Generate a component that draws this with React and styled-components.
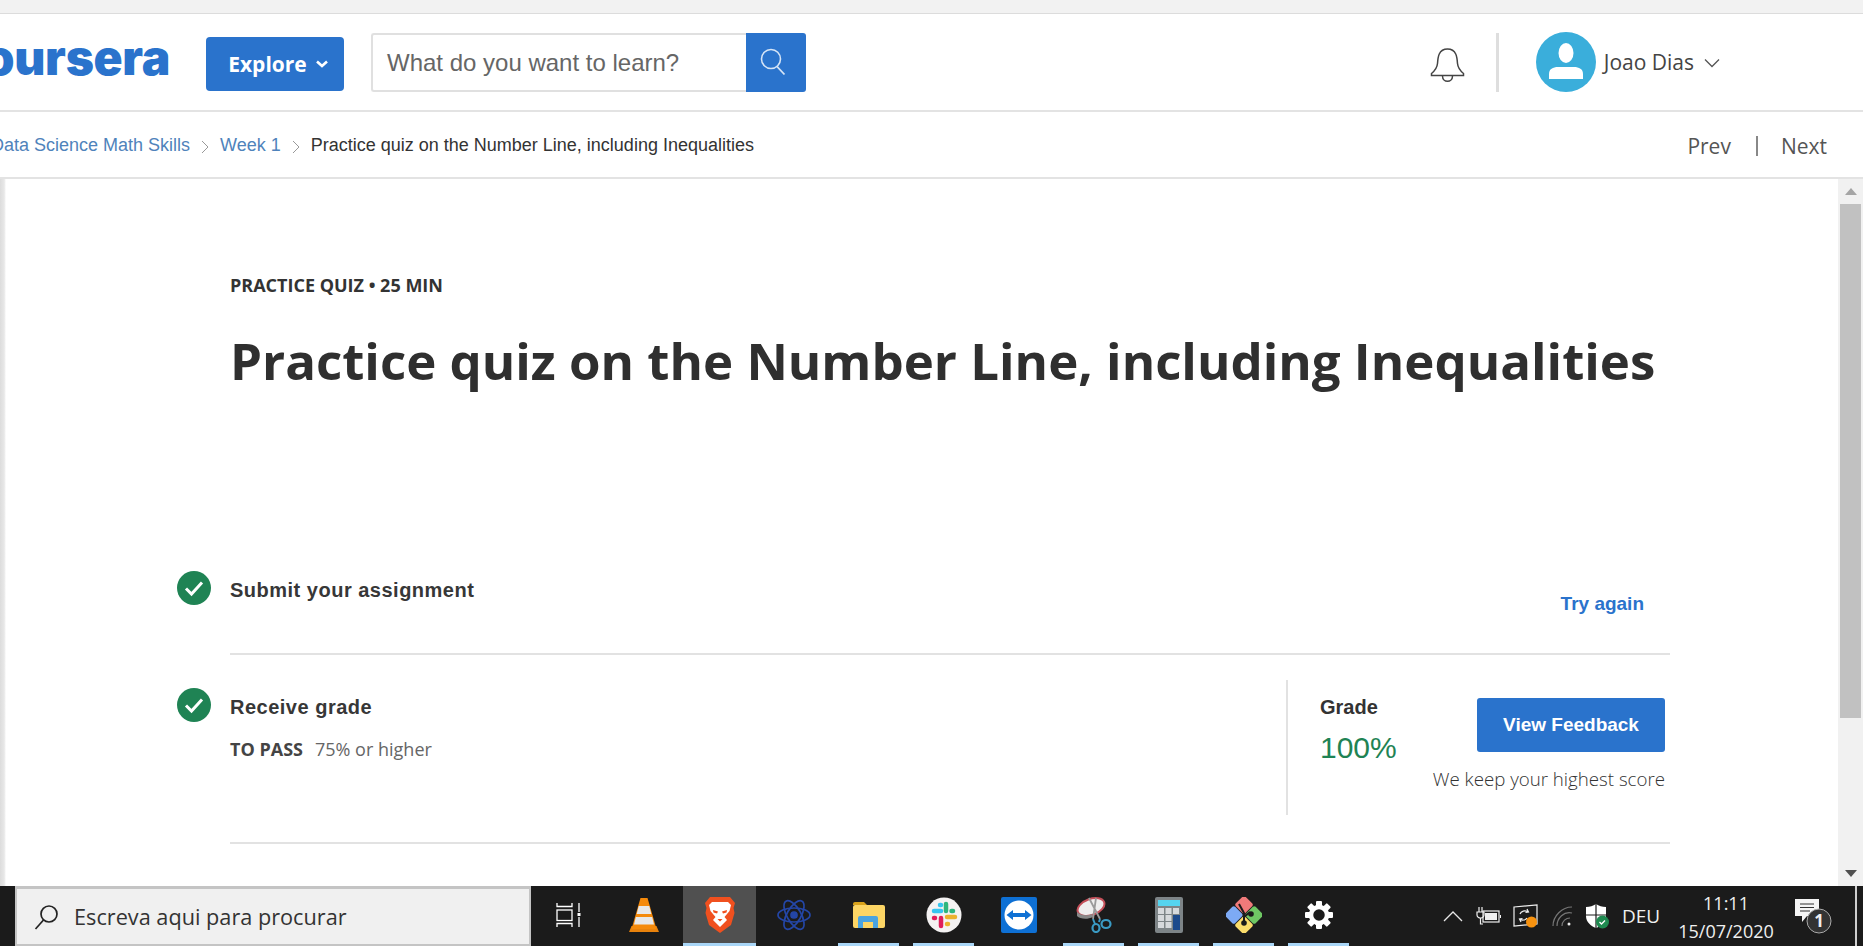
import React from "react";
import styled, { createGlobalStyle } from "styled-components";

const Global = createGlobalStyle`
  html, body { margin: 0; padding: 0; height: 946px; overflow: hidden; background: #fff; }
  body { font-family: "Open Sans", sans-serif; }
  * { box-sizing: border-box; }
`;
const Page = styled.div`width:1863px;height:946px;display:flex;flex-direction:column;overflow:hidden;`;
const BrowserStrip = styled.div`height:14px;flex:none;background:#f2f2f2;border-bottom:1px solid #dcdcdc;`;
const Header = styled.header`height:98px;flex:none;display:flex;align-items:center;border-bottom:2px solid #e3e3e3;`;
const LogoClip = styled.div`width:170px;flex:none;display:flex;justify-content:flex-end;overflow:hidden;margin-bottom:9px;`;
const Logo = styled.span`font-family:Inter,sans-serif;font-weight:900;font-size:48px;letter-spacing:-.3px;line-height:56px;color:#2a73cc;white-space:nowrap;`;
const ExploreBtn = styled.button`margin:4px 0 0 36px;width:138px;height:54px;border:none;border-radius:4px;background:#2a73cc;color:#fff;font-family:"Open Sans",sans-serif;font-weight:700;font-size:21px;display:flex;align-items:center;justify-content:center;gap:9px;padding:0 0 0 6px;`;
const SearchBox = styled.div`margin-left:27px;display:flex;height:59px;`;
const SearchInput = styled.div`width:375px;border:2px solid #e0e0e0;border-right:none;border-radius:3px 0 0 3px;padding:2px 0 0 14px;display:flex;align-items:center;font-family:"Liberation Sans",sans-serif;font-size:24px;color:#666;`;
const SearchBtn = styled.div`width:60px;background:#2a73cc;border-radius:0 3px 3px 0;display:flex;align-items:center;justify-content:center;padding-right:7px;`;
const HeaderRight = styled.div`margin-left:auto;display:flex;align-items:center;padding-right:143px;`;
const BellSlot = styled.div`display:flex;padding-top:5px;`;
const HeaderDivider = styled.div`width:3px;height:59px;background:#dedede;margin:0 37px 0 31px;`;
const UserName = styled.span`font-size:21px;color:#444;margin-left:8px;`;
const UserChevron = styled.span`display:flex;margin-left:10px;padding-top:2px;`;

const Crumbs = styled.nav`height:67px;flex:none;display:flex;align-items:center;border-bottom:2px solid #e3e3e3;font-family:"Liberation Sans",sans-serif;font-size:18px;color:#333;padding-top:2px;`;
const CrumbClip = styled.div`width:190px;flex:none;display:flex;justify-content:flex-end;overflow:hidden;white-space:nowrap;`;
const CrumbLink = styled.span`color:#4f83bb;white-space:nowrap;`;
const CrumbSep = styled.span`display:flex;width:30px;justify-content:center;padding-top:2px;`;
const PrevNext = styled.div`margin-left:auto;display:flex;align-items:center;padding-right:36px;font-family:"Open Sans",sans-serif;font-size:21px;color:#555;`;
const PipeSep = styled.span`width:2px;height:20px;background:#888;margin:0 23px 0 25px;`;

const Main = styled.main`flex:1;min-height:0;display:flex;`;
const LeftEdge = styled.div`width:6px;flex:none;background:linear-gradient(90deg,#dcdcdc,#e8e8e8 70%,#fff);`;
const Content = styled.div`flex:1;min-width:0;padding:94px 0 0 171px;`;
const Scrollbar = styled.div`width:25px;flex:none;background:#f1f1f1;padding:0 2px;display:flex;flex-direction:column;align-items:stretch;`;
const ScrollArrow = styled.div`height:25px;flex:none;display:flex;align-items:center;justify-content:center;${p=>p.$down?"margin-top:auto;height:26px;":""}`;
const ScrollThumb = styled.div`height:514px;background:#c1c1c1;`;
const Intro = styled.div`padding-left:53px;height:298px;`;
const Eyebrow = styled.div`font-weight:700;font-size:18px;line-height:24px;color:#333;`;
const Title = styled.h1`margin:31px 0 0;font-weight:700;font-size:51px;line-height:64px;color:#2f2f2f;white-space:nowrap;`;
const Step = styled.section`display:flex;width:1493px;`;
const CheckSlot = styled.div`width:34px;height:34px;flex:none;margin:${p=>p.$top}px 19px 0 0;`;
const StepBody = styled.div`flex:1;display:flex;justify-content:space-between;border-bottom:2px solid #e2e2e2;height:${p=>p.$h}px;`;
const StepLeft = styled.div`padding-top:${p=>p.$top}px;`;
const StepTitle = styled.div`font-family:"Liberation Sans",sans-serif;font-weight:700;font-size:20px;letter-spacing:.5px;line-height:38px;color:#373737;`;
const PassLine = styled.div`margin-top:5px;font-size:18px;line-height:36px;color:#666;`;
const PassLabel = styled.b`font-weight:700;font-size:18px;color:#444;margin-right:12px;`;
const TryAgain = styled.a`font-family:"Liberation Sans",sans-serif;font-weight:700;font-size:19px;line-height:38px;color:#2a73cc;margin:14px 26px 0 0;`;
const GradePanel = styled.div`margin-top:25px;height:135px;width:384px;border-left:2px solid #e2e2e2;padding:0 5px 0 32px;display:flex;justify-content:space-between;`;
const GradeCol = styled.div`padding-top:8px;`;
const GradeLabel = styled.div`font-family:"Liberation Sans",sans-serif;font-weight:700;font-size:20px;line-height:38px;color:#333;`;
const GradeValue = styled.div`font-family:"Liberation Sans",sans-serif;font-size:30px;line-height:40px;margin-top:2px;color:#1f8354;`;
const ActionCol = styled.div`padding-top:18px;display:flex;flex-direction:column;align-items:flex-end;`;
const FeedbackBtn = styled.button`width:188px;height:54px;border:none;border-radius:3px;background:#2a73cc;color:#fff;font-family:"Liberation Sans",sans-serif;font-weight:700;font-size:19px;`;
const Keep = styled.div`margin-top:15px;font-size:18.7px;font-weight:300;line-height:24px;color:#333;white-space:nowrap;`;

const Taskbar = styled.footer`height:60px;flex:none;background:#1b1b1b;display:flex;color:#fff;padding-left:15px;`;
const TaskSearch = styled.div`width:516px;flex:none;background:#f0f0f0;border:solid #c4c4c4;border-width:3px 2px 2px 2px;display:flex;align-items:center;gap:15px;padding-left:17px;font-size:21.7px;color:#333;`;
const Tiles = styled.div`display:flex;`;
const Tile = styled.div`position:relative;width:75px;display:flex;align-items:center;justify-content:center;padding-bottom:3px;${p=>p.$active?"background:#505050;background-clip:padding-box;border-left:2px solid transparent;":""}
  &::after{content:"";display:${p=>p.$open?"block":"none"};position:absolute;bottom:0;height:3px;background:#a9d6f7;left:${p=>p.$active?0:7}px;right:${p=>p.$active?0:7}px;}`;
const Tray = styled.div`margin-left:auto;display:flex;`;
const TraySlot = styled.div`width:${p=>p.$w}px;display:flex;align-items:center;justify-content:center;`;
const TrayLabel = styled(TraySlot)`font-size:19px;color:#f0f0f0;`;
const Clock = styled(TraySlot)`flex-direction:column;font-size:18px;line-height:28px;color:#f0f0f0;padding-top:1px;`;
const EndLine = styled.div`width:2px;background:#cfcfcf;margin-left:12px;margin-right:6px;`;

const Check = () => (
  <svg width="34" height="34" viewBox="0 0 34 34"><circle cx="17" cy="17" r="17" fill="#1f8354"/><path d="M9 17.5l5.5 5.5L25 11.5" fill="none" stroke="#fff" strokeWidth="3"/></svg>
);
const Chev = ({w=16,h=10,c="#555",sw=1.3}) => (
  <svg width={w} height={h} viewBox="0 0 16 10"><path d="M1 1.5l7 7 7-7" fill="none" stroke={c} strokeWidth={sw}/></svg>
);
const CrumbChev = () => (
  <svg width="8" height="14" viewBox="0 0 8 14"><path d="M1 1l6 6-6 6" fill="none" stroke="#999" strokeWidth="1"/></svg>
);
const Magnifier = () => (
  <svg width="26" height="28" viewBox="0 0 26 28"><circle cx="11" cy="11" r="9.5" fill="none" stroke="#d5e4f6" strokeWidth="1.6"/><path d="M17 18.5l7.5 8" stroke="#d5e4f6" strokeWidth="1.8"/></svg>
);
const Bell = () => (
  <svg width="35" height="37" viewBox="0 0 35 37" fill="none" stroke="#444" strokeWidth="1.5"><path d="M1.5 29.5v-2c3.6-3 5.6-5.6 6-10 .4-6 1-14.5 10-14.5s9.600 8.500 10 14.500c.4 4.400 2.400 7 6 10v2z"/><path d="M12.500 30c0 7 10 7 10 0"/></svg>
);
const Avatar = () => (
  <svg width="60" height="60" viewBox="0 0 60 60"><circle cx="30" cy="30" r="30" fill="#3aaedb"/><ellipse cx="30" cy="21" rx="7.500" ry="10" fill="#fff"/><path d="M13 47v-5c0-5 4-7 9-7h16c5 0 9 2 9 7v5z" fill="#fff"/></svg>
);
const ExploreChev = () => (
  <svg width="12" height="8" viewBox="0 0 12 8"><path d="M1 1.500l5 4.500 5-4.500" fill="none" stroke="#fff" strokeWidth="2.600"/></svg>
);
const ScrollTri = ({down,c}) => (
  <svg width="12" height="7" viewBox="0 0 12 7"><path d={down?"M0 0h12L6 7z":"M0 7h12L6 0z"} fill={c}/></svg>
);
const WinSearch = () => (
  <svg width="25" height="26" viewBox="0 0 25 26" fill="none" stroke="#222" strokeWidth="1.700"><circle cx="15" cy="10" r="8"/><path d="M9.500 16L1.500 25"/></svg>
);
const TaskView = () => (
  <svg width="28" height="26" viewBox="0 0 28 26" fill="none" stroke="#fff" strokeWidth="1.300"><path d="M2 1v3.500h15V1M2 25v-3.500h15V25"/><rect x="2" y="8" width="15" height="10.500"/><path d="M24 1v9M24 15v10"/><rect x="22.500" y="11" width="3" height="3" fill="#fff" stroke="none"/></svg>
);
const Vlc = () => (
  <svg width="32" height="36" viewBox="0 0 32 36"><path d="M1 35l2.500-6h25l2.500 6z" fill="#e8820c"/><path d="M12.500 1h7l9 31H3.500z" fill="#f58a0b"/><path d="M10.700 9h10.600l2 8H8.700zM7.800 20h16.400l1.800 7.500H6z" fill="#e8e8e8"/></svg>
);
const Brave = () => (
  <svg width="32" height="37" viewBox="0 0 32 37"><path d="M6 1h20l5 6-1.500 5 1 5-3.500 12-11 8-11-8L1.500 17l1-5L1 7z" fill="#f0501f"/><path d="M8 6h16l3 3-1.500 6-5 6 2.500 3-7 7-7-7 2.500-3-5-6L5 9z" fill="#fff"/><path d="M9 14l5 1.500-1 2-3.500-1zM23 14l-5 1.500 1 2 3.500-1zM13.500 23h5L16 25.500z" fill="#f0501f"/></svg>
);
const Atom = () => (
  <svg width="34" height="36" viewBox="0 0 34 36" fill="none" stroke="#2446a6" strokeWidth="1.700"><ellipse cx="17" cy="18" rx="16" ry="7"/><ellipse cx="17" cy="18" rx="16" ry="7" transform="rotate(60 17 18)"/><ellipse cx="17" cy="18" rx="16" ry="7" transform="rotate(120 17 18)"/><circle cx="17" cy="18" r="3" fill="#2446a6"/></svg>
);
const Folder = () => (
  <svg width="33" height="28" viewBox="0 0 33 28"><path d="M1 3a2 2 0 012-2h9l3 3h-14z" fill="#d9a21b"/><rect x="1" y="4" width="32" height="23" rx="2" fill="#fcd565"/><path d="M6 27v-10a2 2 0 012-2h16a2 2 0 012 2v10h-5v-6h-10v6z" fill="#4aa3e0"/></svg>
);
const Slack = () => (
  <svg width="36" height="36" viewBox="0 0 36 36"><circle cx="18" cy="18" r="17.500" fill="#f4f2f2"/><g strokeWidth="4.500" strokeLinecap="round" fill="none"><path d="M8 14h7" stroke="#36c5f0"/><path d="M20 7v7" stroke="#2eb67d"/><path d="M25.500 14h1.500" stroke="#2eb67d"/><path d="M21 20h8" stroke="#ecb22e"/><path d="M21 27h1" stroke="#ecb22e"/><path d="M15 21v8" stroke="#e01e5a"/><path d="M8 21h1" stroke="#e01e5a"/><path d="M14 8h1" stroke="#36c5f0"/></g></svg>
);
const TeamViewer = () => (
  <svg width="36" height="36" viewBox="0 0 36 36"><rect width="36" height="36" rx="2" fill="#0e70d4"/><circle cx="18" cy="18" r="14.500" fill="#fff"/><path d="M5.500 18l6.500-5v3h12v-3l6.500 5-6.500 5v-3h-12v3z" fill="#0e70d4"/></svg>
);
const Snip = () => (
  <svg width="36" height="36" viewBox="0 0 36 36" fill="none"><ellipse cx="15" cy="10" rx="14" ry="8" transform="rotate(-20 15 10)" fill="#eee" stroke="#c5505a" strokeWidth="2"/><path d="M1 15c4 4 11 4 15 2l1 3c-6 3-13 2-16-1z" fill="#888"/><path d="M13 1l11 21M20 1l-3 21" stroke="#9a9a9a" strokeWidth="1.800"/><path d="M17 22l2 5M24 22l-1 3" stroke="#3a9bc4" strokeWidth="2"/><ellipse cx="20" cy="31" rx="3.500" ry="4" stroke="#3a9bc4" strokeWidth="2.200"/><ellipse cx="30" cy="27" rx="4.500" ry="4" stroke="#3a9bc4" strokeWidth="2.200"/></svg>
);
const Calc = () => (
  <svg width="28" height="36" viewBox="0 0 28 36"><rect width="28" height="36" rx="2" fill="#7d8487"/><rect x="3" y="3" width="22" height="6" fill="#55d4ef"/>{[[3,11],[10.500,11],[18,11],[3,18],[10.500,18],[3,25],[10.500,25]].map(([x,y])=><rect key={x+"-"+y} x={x} y={y} width="6" height="6" fill="#d6d9dc"/>)}<rect x="18" y="18" width="7" height="15" fill="#1c4a8c"/></svg>
);
const GitApp = () => (
  <svg width="36" height="36" viewBox="0 0 36 36"><g transform="rotate(45 18 18)"><rect x="4" y="4" width="13.500" height="13.500" rx="2" fill="#f07a7a"/><rect x="18.500" y="4" width="13.500" height="13.500" rx="2" fill="#6fc864"/><rect x="4" y="18.500" width="13.500" height="13.500" rx="2" fill="#7daaf5"/><rect x="18.500" y="18.500" width="13.500" height="13.500" rx="2" fill="#fbdd6b"/></g><path d="M18 28V16L13 7M18 20l6-5" stroke="#1b1b1b" strokeWidth="2" fill="none"/><circle cx="18" cy="26" r="2.800" fill="#1b1b1b"/><circle cx="25" cy="17" r="2.800" fill="#1b1b1b"/></svg>
);
const Gear = () => (
  <svg width="28" height="28" viewBox="0 0 28 28">{[0,45,90,135,180,225,270,315].map(a=><rect key={a} x="11" y="0" width="6" height="7" fill="#fff" rx="1" transform={`rotate(${a} 14 14)`}/>)}<circle cx="14" cy="14" r="8" fill="none" stroke="#fff" strokeWidth="4.500"/></svg>
);
const TrayUp = () => (
  <svg width="20" height="11" viewBox="0 0 20 11"><path d="M1 10l9-9 9 9" fill="none" stroke="#e8e8e8" strokeWidth="1.300"/></svg>
);
const Plug = () => (
  <svg width="25" height="20" viewBox="0 0 25 20" fill="none" stroke="#f0f0f0" strokeWidth="1.200"><path d="M1 6h7v3c0 2-2 3-3.500 3S1 11 1 9zM3 6V1M6 6V1M4.500 12v6H7"/><rect x="7" y="5" width="16" height="11"/><rect x="9" y="7" width="12" height="7" fill="#f0f0f0" stroke="none"/><path d="M24.500 9v3"/></svg>
);
const SyncApp = () => (
  <svg width="25" height="24" viewBox="0 0 25 24" fill="none" stroke="#f0f0f0" strokeWidth="1.200"><path d="M1 3l23-2v19l-23 2z"/><path d="M7 10c1-3 5-4 8-2M14 5l1.500 3-3 .5M14 14c-1 2-5 3-7 1M8 18l-1.500-3 3-.5"/><circle cx="18.500" cy="18" r="5.500" fill="#f7920f" stroke="none"/></svg>
);
const Wifi = () => (
  <svg width="22" height="21" viewBox="0 0 22 21" fill="none" stroke="#777" strokeWidth="1.200"><path d="M1 20C1 10 10 1 20 1M5 20c0-8 7-15 15-13M10 20c0-5 4-8 8-8"/><circle cx="17" cy="18" r="1.500" fill="#eee" stroke="none"/></svg>
);
const Shield = () => (
  <svg width="24" height="25" viewBox="0 0 24 25"><path d="M1 3c4 0 7-1 10-3 3 2 6 3 10 3v9c0 6-5 10-10 12C6 22 1 18 1 12z" fill="#fff"/><path d="M11 0v24M1 11h20" stroke="#1b1b1b" strokeWidth="1.200"/><circle cx="17.500" cy="18" r="6.500" fill="#1f8a50"/><path d="M14.500 18l2 2 3.500-3.500" stroke="#fff" strokeWidth="1.300" fill="none"/></svg>
);
const Notif = () => (
  <svg width="38" height="38" viewBox="0 0 38 38"><path d="M1 2h24v17h-12l-5 6v-6H1z" fill="#f5f5f5"/><path d="M6 7h14M6 10.500h14M6 14h10" stroke="#333" strokeWidth="1.200"/><circle cx="25" cy="24" r="12" fill="#333" stroke="#aaa" strokeWidth="1"/><text x="25" y="30" textAnchor="middle" fontSize="17" fontWeight="700" fontFamily="Open Sans" fill="#f0f0f0">1</text></svg>
);

const apps = [
  { id:"tv", I:TaskView },
  { id:"vlc", I:Vlc },
  { id:"brave", I:Brave, open:true, active:true },
  { id:"atom", I:Atom },
  { id:"folder", I:Folder, open:true },
  { id:"slack", I:Slack, open:true },
  { id:"team", I:TeamViewer },
  { id:"snip", I:Snip, open:true },
  { id:"calc", I:Calc, open:true },
  { id:"git", I:GitApp, open:true },
  { id:"gear", I:Gear, open:true },
];

export default function App() {
  return (
    <Page>
      <Global />
      <BrowserStrip />
      <Header>
        <LogoClip><Logo>coursera</Logo></LogoClip>
        <ExploreBtn>Explore <ExploreChev /></ExploreBtn>
        <SearchBox>
          <SearchInput>What do you want to learn?</SearchInput>
          <SearchBtn><Magnifier /></SearchBtn>
        </SearchBox>
        <HeaderRight>
          <BellSlot><Bell /></BellSlot>
          <HeaderDivider />
          <Avatar />
          <UserName>Joao Dias</UserName>
          <UserChevron><Chev /></UserChevron>
        </HeaderRight>
      </Header>
      <Crumbs>
        <CrumbClip><CrumbLink>Data Science Math Skills</CrumbLink></CrumbClip>
        <CrumbSep><CrumbChev /></CrumbSep>
        <CrumbLink>Week 1</CrumbLink>
        <CrumbSep><CrumbChev /></CrumbSep>
        <span>Practice quiz on the Number Line, including Inequalities</span>
        <PrevNext>Prev<PipeSep />Next</PrevNext>
      </Crumbs>
      <Main>
        <LeftEdge />
        <Content>
          <Intro>
            <Eyebrow>PRACTICE QUIZ • 25 MIN</Eyebrow>
            <Title>Practice quiz on the Number Line, including Inequalities</Title>
          </Intro>
          <Step>
            <CheckSlot $top={0}><Check /></CheckSlot>
            <StepBody $h={84}>
              <StepLeft $top={0}><StepTitle>Submit your assignment</StepTitle></StepLeft>
              <TryAgain>Try again</TryAgain>
            </StepBody>
          </Step>
          <Step>
            <CheckSlot $top={33}><Check /></CheckSlot>
            <StepBody $h={189}>
              <StepLeft $top={33}>
                <StepTitle>Receive grade</StepTitle>
                <PassLine><PassLabel>TO PASS</PassLabel>75% or higher</PassLine>
              </StepLeft>
              <GradePanel>
                <GradeCol>
                  <GradeLabel>Grade</GradeLabel>
                  <GradeValue>100%</GradeValue>
                </GradeCol>
                <ActionCol>
                  <FeedbackBtn>View Feedback</FeedbackBtn>
                  <Keep>We keep your highest score</Keep>
                </ActionCol>
              </GradePanel>
            </StepBody>
          </Step>
        </Content>
        <Scrollbar>
          <ScrollArrow><ScrollTri c="#a5a5a5" /></ScrollArrow>
          <ScrollThumb />
          <ScrollArrow $down><ScrollTri down c="#505050" /></ScrollArrow>
        </Scrollbar>
      </Main>
      <Taskbar>
        <TaskSearch><WinSearch />Escreva aqui para procurar</TaskSearch>
        <Tiles>
          {apps.map(({id,I,open,active}) => (
            <Tile key={id} $open={open} $active={active}><I /></Tile>
          ))}
        </Tiles>
        <Tray>
          <TraySlot $w={34}><TrayUp /></TraySlot>
          <TraySlot $w={36}><Plug /></TraySlot>
          <TraySlot $w={38}><SyncApp /></TraySlot>
          <TraySlot $w={37}><Wifi /></TraySlot>
          <TraySlot $w={32}><Shield /></TraySlot>
          <TrayLabel $w={56}>DEU</TrayLabel>
          <Clock $w={114}><span>11:11</span><span>15/07/2020</span></Clock>
          <TraySlot $w={60}><Notif /></TraySlot>
          <EndLine />
        </Tray>
      </Taskbar>
    </Page>
  );
}
